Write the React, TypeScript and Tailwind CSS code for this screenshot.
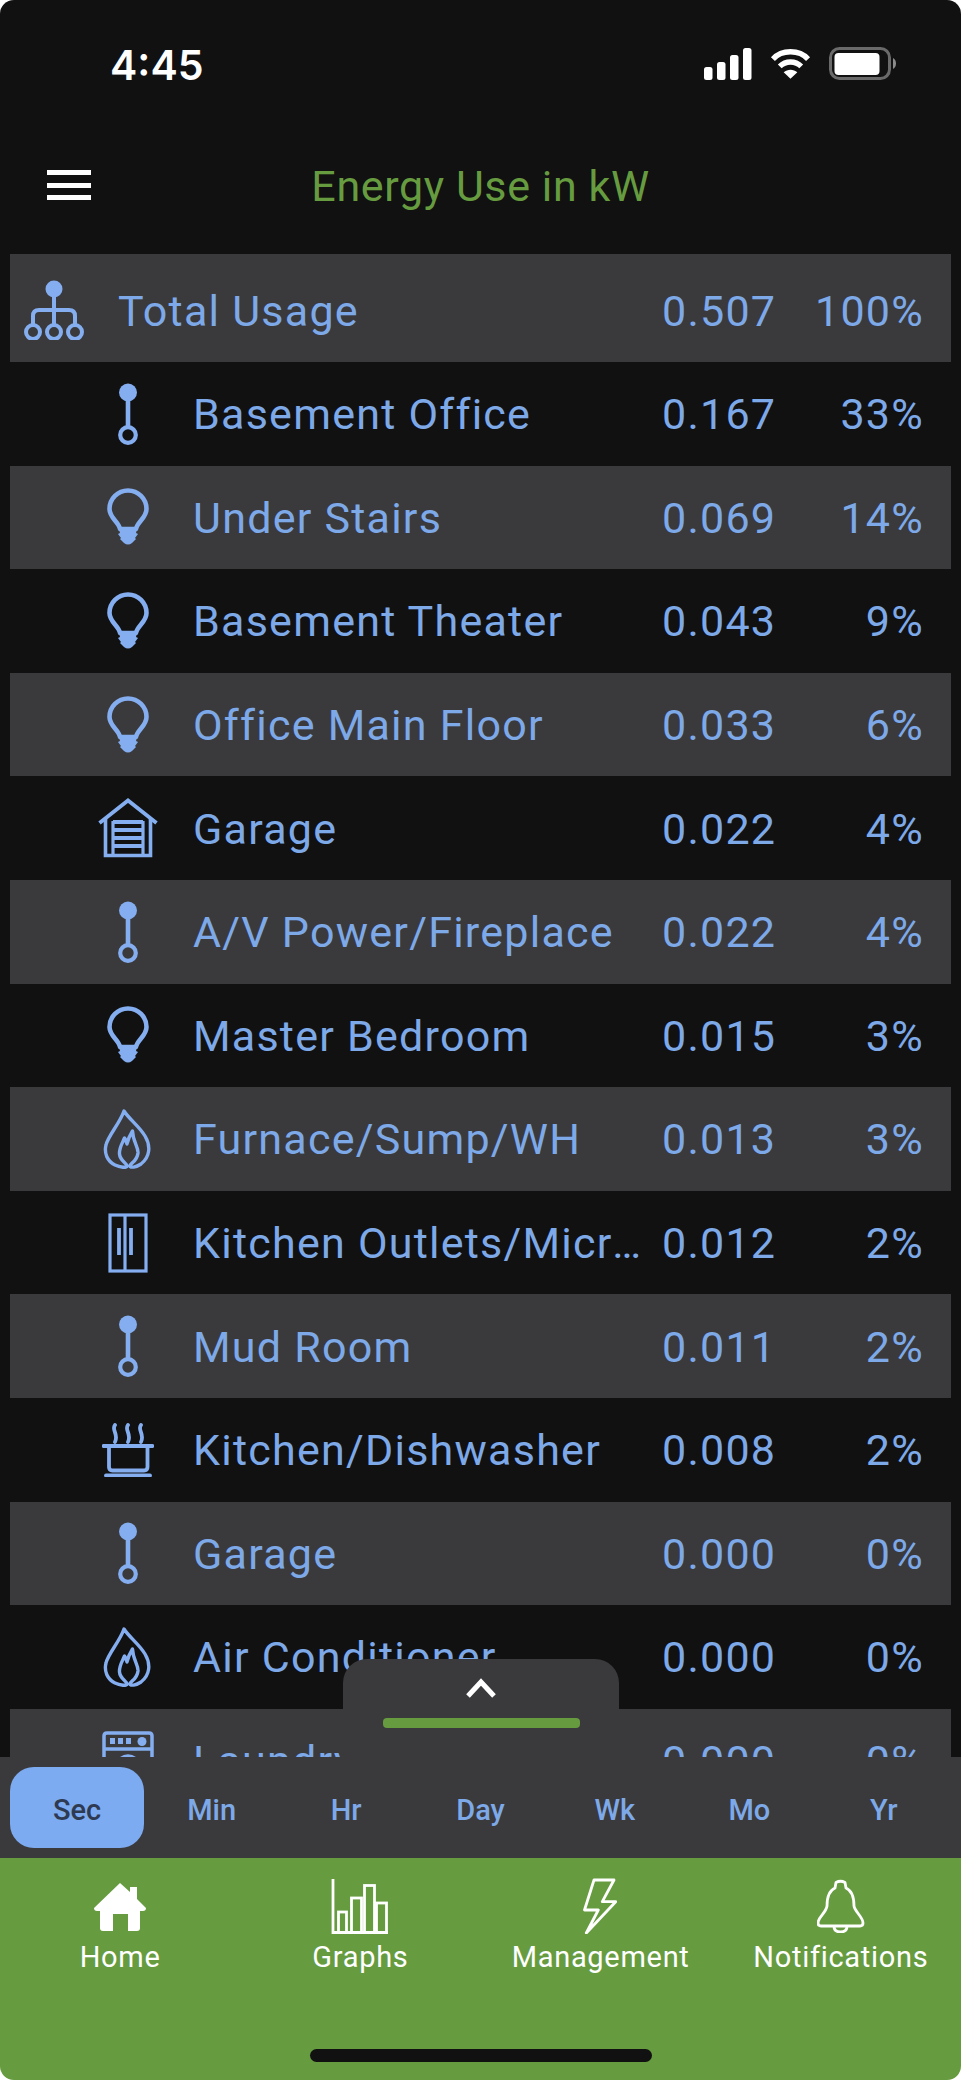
function NodeIcon() {
  return (
    <svg width="30" height="64" viewBox="0 0 30 64" className="text-[#84aef0]">
      <circle cx="15" cy="10.5" r="9" fill="currentColor" />
      <line x1="15" y1="15" x2="15" y2="46" stroke="currentColor" strokeWidth="4.6" />
      <circle cx="15" cy="53" r="7.8" fill="none" stroke="currentColor" strokeWidth="4.2" />
    </svg>
  );
}
function BulbIcon() {
  return (
    <svg width="44" height="60" viewBox="0 -2 44 60" className="text-[#84aef0]">
      <path d="M14 40 C13 33 3.5 29 3.500 20 A18.500 18.500 0 0 1 40.500 20 C40.500 29 31 33 30 40 Z" fill="none" stroke="currentColor" strokeWidth="4.6" strokeLinejoin="round" />
      <path d="M13 40 H31 L30 44 L32 45 L29 49 L30 50 L26 54 Q22 57 18 54 L14 50 L15 49 L12 45 L14 44 Z" fill="currentColor" />
    </svg>
  );
}
function GarageIcon() {
  return (
    <svg width="60" height="60" viewBox="0 0 60 60" className="text-[#84aef0]">
      <path d="M1.5 25 L30 2.5 L58.5 25" fill="none" stroke="currentColor" strokeWidth="3.8" />
      <path d="M7.5 21 V57.5 H52.5 V21" fill="none" stroke="currentColor" strokeWidth="3.6" />
      <path d="M15 23 V57 M45 23 V57" stroke="currentColor" strokeWidth="3.2" />
      <path d="M15 24 H45 M15 32 H45 M15 40 H45 M15 48 H45" stroke="currentColor" strokeWidth="3.8" />
    </svg>
  );
}
function FlameIcon() {
  return (
    <svg width="50" height="60" viewBox="0 0 50 60" fill="none" stroke="#84aef0" strokeWidth="3.4" strokeLinejoin="round">
      <path d="M21 2 C26 10 36 17 42 27 C48 37 47 48 38 55 C33 58.5 27 59 27 57 C27 54 34 53 35 44 C35.5 38 30 33 29.5 22 C27 26 25 30 24 35 C23 32 22.5 30 21.5 29 C19 35 16 39 16.5 45 C17 52 24 54 24 57 C24 59 17 58.5 12 56 C4 52 1 44 3 36 C5 27 17 14 21 2 Z" />
    </svg>
  );
}
function FridgeIcon() {
  return (
    <svg width="40" height="60" viewBox="0 0 40 60" fill="none" stroke="#84aef0" strokeWidth="3.2">
      <rect x="2" y="2" width="36" height="56" />
      <path d="M17 2 V58" />
      <path d="M11 15 V42 M23 15 V42" strokeWidth="3.8" />
    </svg>
  );
}
function DishIcon() {
  return (
    <svg width="52" height="54" viewBox="0 0 52 54" fill="none" stroke="#84aef0" strokeWidth="3.8" strokeLinecap="round">
      <path d="M1.5 23 H50.5" />
      <path d="M7 23 V44 Q7 47.5 10.5 47.5 H42 Q45.5 47.5 45.5 44 V23" />
      <path d="M4 52.5 H48" />
      <path d="M13 2 C9 7 17 11 13 19 M26 2 C22 7 30 11 26 19 M39 2 C35 7 43 11 39 19" />
    </svg>
  );
}
function LaundryIcon() {
  return (
    <svg width="52" height="60" viewBox="0 0 52 60" fill="none" stroke="#84aef0" strokeWidth="3.5">
      <path d="M2 58 V5 Q2 2 5 2 H47 Q50 2 50 5 V58 M2 18 H50" />
      <path d="M8 7 H13 V13 H8 Z M16 7 H21 V13 H16 Z M24 7 H29 V13 H24 Z" fill="#84aef0" stroke="none" />
      <circle cx="40" cy="10.5" r="4.5" fill="#84aef0" stroke="none" />
      <circle cx="26" cy="36" r="11" />
    </svg>
  );
}
function TreeIcon() {
  return (
    <svg width="60" height="60" viewBox="0 0 60 60" fill="none" stroke="#84aef0" strokeWidth="4">
      <circle cx="30" cy="9" r="8.5" fill="#84aef0" stroke="none" />
      <path d="M30 14 V44 M9 44 V36 Q9 30 15 30 H45 Q51 30 51 36 V44" />
      <circle cx="9" cy="52" r="7" />
      <circle cx="30" cy="52" r="7" />
      <circle cx="51" cy="52" r="7" />
    </svg>
  );
}
const rows: [React.ComponentType, string, string, string][] = [
  [NodeIcon, "Basement Office", "0.167", "33%"],
  [BulbIcon, "Under Stairs", "0.069", "14%"],
  [BulbIcon, "Basement Theater", "0.043", "9%"],
  [BulbIcon, "Office Main Floor", "0.033", "6%"],
  [GarageIcon, "Garage", "0.022", "4%"],
  [NodeIcon, "A/V Power/Fireplace", "0.022", "4%"],
  [BulbIcon, "Master Bedroom", "0.015", "3%"],
  [FlameIcon, "Furnace/Sump/WH", "0.013", "3%"],
  [FridgeIcon, "Kitchen Outlets/Microwave", "0.012", "2%"],
  [NodeIcon, "Mud Room", "0.011", "2%"],
  [DishIcon, "Kitchen/Dishwasher", "0.008", "2%"],
  [NodeIcon, "Garage", "0.000", "0%"],
  [FlameIcon, "Air Conditioner", "0.000", "0%"],
  [LaundryIcon, "Laundry", "0.000", "0%"],
];
const periods = ["Sec", "Min", "Hr", "Day", "Wk", "Mo", "Yr"];

function Row({ icon: Icon, name, val, pct, striped }: { icon: React.ComponentType; name: string; val: string; pct: string; striped: boolean }) {
  return (
    <div className={`flex h-[103.6px] items-center pr-[27px] text-[#7ea9e8] ${striped ? "bg-[#3a3a3c]" : ""}`}>
      <div className="flex w-[183px] shrink-0 justify-end pr-[35px]">
        <div className="flex w-[60px] justify-center"><Icon /></div>
      </div>
      <div className="w-[469px] truncate pr-[4px] pt-[1px]">{name}</div>
      <div className="w-[111px] pt-[1px]">{val}</div>
      <div className="flex-1 pt-[1px] text-right">{pct}</div>
    </div>
  );
}

export default function App() {
  return (
    <div className="relative flex h-[2080px] w-[961px] flex-col overflow-hidden bg-white font-['Roboto',sans-serif]">
      <div className="relative flex min-h-0 flex-1 flex-col overflow-hidden rounded-t-[14px] bg-[#111112]">
        <div className="flex h-[130px] shrink-0 items-start justify-between pl-[110px] pr-[64px] pt-[41px]">
          <span className="font-['Inter',sans-serif] text-[41px] font-semibold leading-[48px] text-white">4:45</span>
          <div className="flex items-center gap-[18px] pt-[6px]">
            <svg width="48" height="32" viewBox="0 0 48 32" fill="white">
              <rect x="0" y="19" width="8.5" height="13" rx="2.5" />
              <rect x="13" y="14" width="8.5" height="18" rx="2.5" />
              <rect x="26" y="7" width="8.5" height="25" rx="2.5" />
              <rect x="39" y="0" width="8.5" height="32" rx="2.5" />
            </svg>
            <svg width="41" height="32" viewBox="0 0 42 32" fill="none" stroke="white" strokeWidth="5.5">
              <path d="M3 11 C12 1 30 1 39 11" />
              <path d="M10 18.5 C16 12.5 26 12.5 32 18.5" />
              <path d="M21 31 L14 24.5 C18 21 24 21 28 24.5 Z" fill="white" stroke="none" />
            </svg>
            <svg width="68" height="33" viewBox="0 0 68 33" fill="none">
              <rect x="1.5" y="1.5" width="59" height="30" rx="9" stroke="#6a6a6a" strokeWidth="3" />
              <rect x="5.5" y="6" width="45" height="22" rx="4" fill="white" />
              <path d="M64 11 C68 13 68 20 64 22 Z" fill="#8a8a8a" />
            </svg>
          </div>
        </div>
        <div className="relative flex h-[124px] shrink-0 items-start justify-center pt-[31px]">
          <div className="absolute left-[47px] top-[40px] flex h-[30px] w-[44px] flex-col justify-between">
            <div className="h-[5px] bg-white" />
            <div className="h-[5px] bg-white" />
            <div className="h-[5px] bg-white" />
          </div>
          <span className="text-[43px] leading-[50px] tracking-[0.6px] text-[#669c3f]">Energy Use in kW</span>
        </div>
        <div className="min-h-0 flex-1 overflow-hidden px-[10px] text-[43px] leading-[50px] tracking-[1.25px]">
          <div className="flex h-[108px] items-center bg-[#3a3a3c] pr-[27px] text-[#7ea9e8]">
            <div className="flex w-[108px] shrink-0 pl-[14px] pr-[34px] pt-[4px]"><TreeIcon /></div>
            <div className="w-[544px] pt-[6px]">Total Usage</div>
            <div className="w-[111px] pt-[6px]">0.507</div>
            <div className="flex-1 pt-[6px] text-right">100%</div>
          </div>
          {rows.map(([icon, name, val, pct], i) => (
            <Row key={i} icon={icon} name={name} val={val} pct={pct} striped={i % 2 === 1} />
          ))}
        </div>
      </div>
      <div className="relative z-10 shrink-0 bg-[#3a3a3c]">
        <div className="absolute -top-[98px] left-[343px] flex h-[98px] w-[276px] flex-col items-center rounded-t-[24px] bg-[#3a3a3c]">
          <svg className="mt-[19px]" width="30" height="20" viewBox="0 0 30 20" fill="none" stroke="white" strokeWidth="5"><path d="M2 18 L15 4 L28 18" /></svg>
          <div className="mt-[20px] h-[10px] w-[197px] rounded-[4px] bg-[#669c3f]" />
        </div>
        <div className="grid h-[101px] grid-cols-7 items-center px-[10px] text-[29px] font-medium text-[#7ea9e8]">
          {periods.map((p, i) => (
            <div key={p} className={`flex h-[81px] items-center justify-center pt-[6px] ${i === 0 ? "w-[134px] rounded-[24px] bg-[#7dabf1] text-[#2e3a52]" : ""}`}>{p}</div>
          ))}
        </div>
      </div>
      <div className="flex h-[222px] shrink-0 flex-col justify-between rounded-b-[14px] bg-[#669c3f] pb-[18px] pt-[18px]">
        <div className="grid grid-cols-4 text-[29px] leading-[36px] tracking-[0.7px] text-white">
          <div className="flex flex-col items-center">
            <div className="flex h-[60px] items-center">
              <svg width="54" height="52" viewBox="0 0 54 52" fill="white"><path d="M27 3 L37 12 V7 H44 V19 L53 28 Q53 31 50 31 H47 V48 Q47 51 44 51 H35 V34 H20 V51 H10 Q7 51 7 48 V31 H4 Q1 31 1 28 Z" /></svg>
            </div>
            <span className="mt-[3px]">Home</span>
          </div>
          <div className="flex flex-col items-center">
            <div className="flex h-[60px] items-center">
              <svg width="58" height="56" viewBox="0 0 58 56" fill="none" stroke="white" strokeWidth="2.8"><path d="M2 1 V54.5 H57" /><rect x="7.5" y="34" width="8" height="20.5" /><rect x="20.5" y="20" width="10" height="34.5" /><rect x="33.5" y="7.5" width="10" height="47" /><rect x="45.5" y="25" width="10" height="29.5" /></svg>
            </div>
            <span className="mt-[3px]">Graphs</span>
          </div>
          <div className="flex flex-col items-center">
            <div className="flex h-[60px] items-center">
              <svg width="36" height="56" viewBox="0 0 36 56" fill="none" stroke="white" strokeWidth="2.8" strokeLinejoin="round"><path d="M11 2 H31 L19.3 23.7 H32.7 L3.3 55 L15.3 32 H1.5 Z" /></svg>
            </div>
            <span className="mt-[3px]">Management</span>
          </div>
          <div className="flex flex-col items-center">
            <div className="flex h-[60px] items-center">
              <svg width="48" height="54" viewBox="0 0 48 54" fill="none" stroke="white" strokeWidth="2.8" strokeLinejoin="round"><path d="M18 9 L19 3.5 Q23.5 1 28 3.5 L29 9 C36 12 37 20 37 27 C38 33 46 38 46 44 Q46 47 43 47 H4 Q1 47 1 44 C1 38 9 34 10 27 C10 20 11 12 18 9 Z" /><path d="M17 47 Q17 53 23.5 53 Q30 53 30 47" /></svg>
            </div>
            <span className="mt-[3px]">Notifications</span>
          </div>
        </div>
        <div className="mx-auto h-[13px] w-[342px] rounded-full bg-[#111112]" />
      </div>
    </div>
  );
}
